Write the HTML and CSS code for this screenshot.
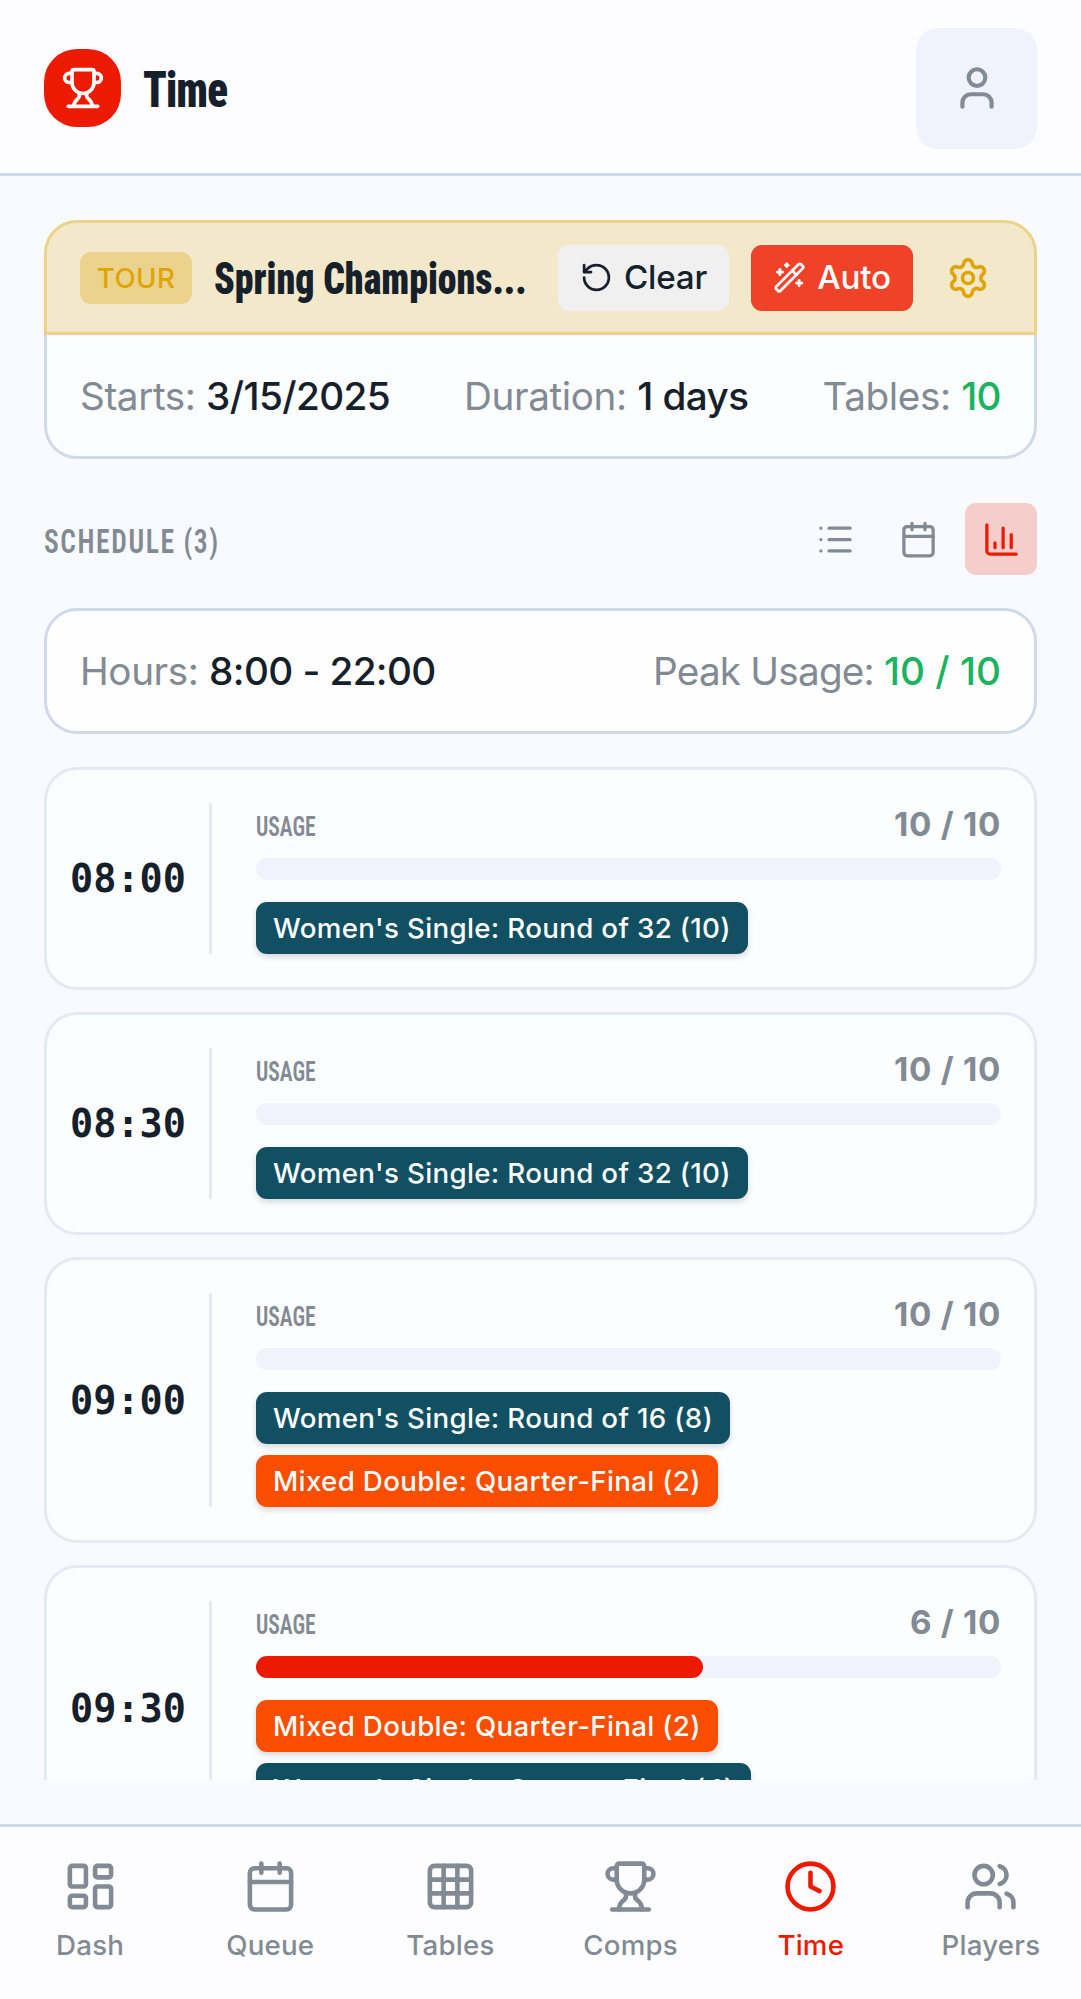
FILE: index.html
```html
<!DOCTYPE html>
<html lang="en">
<head>
    <meta charset="UTF-8">
    <meta name="viewport" content="width=device-width, initial-scale=1.0">
    <title>Time</title>
    <link rel="stylesheet" href="styles.css">
</head>
<body>

    <!-- Top header -->
    <header class="header">
        <div class="brand">
            <div class="logo">
                <svg class="icon icon-md" viewBox="0 0 24 24"><path d="M10 14.66v1.626a2 2 0 0 1-.976 1.696A5 5 0 0 0 7 21.978"/><path d="M14 14.66v1.626a2 2 0 0 0 .976 1.696A5 5 0 0 1 17 21.978"/><path d="M18 9h1.5a1 1 0 0 0 0-5H18"/><path d="M4 22h16"/><path d="M6 9a6 6 0 0 0 12 0V3a1 1 0 0 0-1-1H7a1 1 0 0 0-1 1z"/><path d="M6 9H4.5a1 1 0 0 1 0-5H6"/></svg>
            </div>
            <h1 class="page-title">Time</h1>
        </div>
        <button class="profile">
            <svg class="icon icon-lg" viewBox="0 0 24 24"><path d="M19 21v-2a4 4 0 0 0-4-4H9a4 4 0 0 0-4 4v2"/><circle cx="12" cy="7" r="4"/></svg>
        </button>
    </header>

    <main class="content">
        <!-- Tournament card -->
        <section class="tour">
            <div class="tour-head">
                <span class="badge">TOUR</span>
                <h2 class="tour-name">Spring Champions...</h2>
                <button class="btn btn-clear">
                    <svg class="icon icon-xs" viewBox="0 0 24 24"><path d="M3 12a9 9 0 1 0 9-9 9.75 9.75 0 0 0-6.74 2.74L3 8"/><path d="M3 3v5h5"/></svg>
                    Clear
                </button>
                <button class="btn btn-auto">
                    <svg class="icon icon-xs" viewBox="0 0 24 24"><path d="m21.64 3.64-1.28-1.28a1.21 1.21 0 0 0-1.72 0L2.36 18.64a1.21 1.21 0 0 0 0 1.72l1.28 1.28a1.2 1.2 0 0 0 1.72 0L21.64 5.36a1.2 1.2 0 0 0 0-1.72"/><path d="m14 7 3 3"/><path d="M5 6v4"/><path d="M19 14v4"/><path d="M10 2v2"/><path d="M7 8H3"/><path d="M21 16h-4"/><path d="M11 3H9"/></svg>
                    Auto
                </button>
                <button class="settings">
                    <svg class="icon icon-md" viewBox="0 0 24 24"><path d="M9.671 4.136a2.34 2.34 0 0 1 4.659 0 2.34 2.34 0 0 0 3.319 1.915 2.34 2.34 0 0 1 2.33 4.033 2.34 2.34 0 0 0 0 3.831 2.34 2.34 0 0 1-2.33 4.033 2.34 2.34 0 0 0-3.319 1.915 2.34 2.34 0 0 1-4.659 0 2.34 2.34 0 0 0-3.32-1.915 2.34 2.34 0 0 1-2.33-4.033 2.34 2.34 0 0 0 0-3.831A2.34 2.34 0 0 1 6.35 6.051a2.34 2.34 0 0 0 3.319-1.915"/><circle cx="12" cy="12" r="3"/></svg>
                </button>
            </div>
            <div class="tour-info">
                <div>Starts: <b>3/15/2025</b></div>
                <div>Duration: <b>1 days</b></div>
                <div>Tables: <b class="green">10</b></div>
            </div>
        </section>

        <!-- Schedule title and view switcher -->
        <div class="schedule-bar">
            <h3 class="schedule-title">SCHEDULE (3)</h3>
            <div class="views">
                <button class="view"><svg class="icon icon-sm" viewBox="0 0 24 24"><path d="M3 5h.01M3 12h.01M3 19h.01M8 5h13M8 12h13M8 19h13"/></svg></button>
                <button class="view"><svg class="icon icon-sm" viewBox="0 0 24 24"><path d="M8 2v4M16 2v4"/><rect width="18" height="18" x="3" y="4" rx="2"/><path d="M3 10h18"/></svg></button>
                <button class="view active"><svg class="icon icon-sm" viewBox="0 0 24 24"><path d="M3 3v16a2 2 0 0 0 2 2h16"/><path d="M18 17V9M13 17V5M8 17v-3"/></svg></button>
            </div>
        </div>

        <section class="summary">
            <div>Hours: <b>8:00 - 22:00</b></div>
            <div class="peak">Peak Usage: <b class="green">10 / 10</b></div>
        </section>

        <!-- Time slots -->
        <div class="slots">
            <article class="slot">
                <div class="slot-time">08:00</div>
                <div class="slot-body">
                    <div class="usage"><span class="usage-label">USAGE</span><span class="usage-count">10 / 10</span></div>
                    <div class="bar"></div>
                    <div class="chips">
                        <span class="chip women">Women's Single: Round of 32 (10)</span>
                    </div>
                </div>
            </article>

            <article class="slot">
                <div class="slot-time">08:30</div>
                <div class="slot-body">
                    <div class="usage"><span class="usage-label">USAGE</span><span class="usage-count">10 / 10</span></div>
                    <div class="bar"></div>
                    <div class="chips">
                        <span class="chip women">Women's Single: Round of 32 (10)</span>
                    </div>
                </div>
            </article>

            <article class="slot">
                <div class="slot-time">09:00</div>
                <div class="slot-body">
                    <div class="usage"><span class="usage-label">USAGE</span><span class="usage-count">10 / 10</span></div>
                    <div class="bar"></div>
                    <div class="chips">
                        <span class="chip women">Women's Single: Round of 16 (8)</span>
                        <span class="chip mixed">Mixed Double: Quarter-Final (2)</span>
                    </div>
                </div>
            </article>

            <article class="slot">
                <div class="slot-time">09:30</div>
                <div class="slot-body">
                    <div class="usage"><span class="usage-label">USAGE</span><span class="usage-count">6 / 10</span></div>
                    <div class="bar"><div class="bar-fill" style="width: 60%"></div></div>
                    <div class="chips">
                        <span class="chip mixed">Mixed Double: Quarter-Final (2)</span>
                        <span class="chip women">Women's Single: Quarter-Final (4)</span>
                    </div>
                </div>
            </article>
        </div>
    </main>

    <!-- Bottom navigation -->
    <nav class="nav">
        <a class="nav-item">
            <svg class="icon icon-xl" viewBox="0 0 24 24"><rect width="7" height="9" x="3" y="3" rx="1"/><rect width="7" height="5" x="14" y="3" rx="1"/><rect width="7" height="9" x="14" y="12" rx="1"/><rect width="7" height="5" x="3" y="16" rx="1"/></svg>
            Dash
        </a>
        <a class="nav-item">
            <svg class="icon icon-xl" viewBox="0 0 24 24"><path d="M8 2v4M16 2v4"/><rect width="18" height="18" x="3" y="4" rx="2"/><path d="M3 10h18"/></svg>
            Queue
        </a>
        <a class="nav-item">
            <svg class="icon icon-xl" viewBox="0 0 24 24"><rect width="18" height="18" x="3" y="3" rx="2"/><path d="M3 9h18M3 15h18M9 3v18M15 3v18"/></svg>
            Tables
        </a>
        <a class="nav-item">
            <svg class="icon icon-xl" viewBox="0 0 24 24"><path d="M10 14.66v1.626a2 2 0 0 1-.976 1.696A5 5 0 0 0 7 21.978"/><path d="M14 14.66v1.626a2 2 0 0 0 .976 1.696A5 5 0 0 1 17 21.978"/><path d="M18 9h1.5a1 1 0 0 0 0-5H18"/><path d="M4 22h16"/><path d="M6 9a6 6 0 0 0 12 0V3a1 1 0 0 0-1-1H7a1 1 0 0 0-1 1z"/><path d="M6 9H4.5a1 1 0 0 1 0-5H6"/></svg>
            Comps
        </a>
        <a class="nav-item active">
            <svg class="icon icon-xl" viewBox="0 0 24 24"><circle cx="12" cy="12" r="10"/><path d="M12 6v6l4 2"/></svg>
            Time
        </a>
        <a class="nav-item">
            <svg class="icon icon-xl" viewBox="0 0 24 24"><path d="M16 21v-2a4 4 0 0 0-4-4H6a4 4 0 0 0-4 4v2"/><path d="M16 3.128a4 4 0 0 1 0 7.744"/><path d="M22 21v-2a4 4 0 0 0-3-3.87"/><circle cx="9" cy="7" r="4"/></svg>
            Players
        </a>
    </nav>

</body>
</html>
```
FILE: styles.css
```css
* {
    box-sizing: border-box;
}

body {
    display: flex;
    flex-direction: column;
    height: 1999px;
    margin: 0;
    overflow: hidden;
    font-family: Inter, "Liberation Sans", sans-serif;
    color: #15202b;
    background-color: #f9faff;
}

h1, h2, h3 {
    margin: 0;
    white-space: nowrap;
}

button {
    flex-shrink: 0;
    padding: 0;
    border: none;
    background: none;
    font-family: inherit;
    color: inherit;
}

b {
    font-weight: 550;
    letter-spacing: -0.6px;
    color: #15202b;
}

.green {
    color: #1bb35f;
}

/* icons */
.icon {
    display: block;
    flex-shrink: 0;
    fill: none;
    stroke: currentColor;
    stroke-width: 2;
    stroke-linecap: round;
    stroke-linejoin: round;
}

.icon-xs { width: 33px; height: 33px; }
.icon-sm { width: 39px; height: 39px; }
.icon-md { width: 44px; height: 44px; }
.icon-lg { width: 50px; height: 50px; }
.icon-xl { width: 55px; height: 55px; }

/* condensed headings */
.page-title,
.tour-name,
.schedule-title,
.usage-label {
    font-family: Roboto, sans-serif;
    font-stretch: 75%;
    transform: scaleX(0.86);
    transform-origin: left;
}

/* header */
.header {
    display: flex;
    flex-shrink: 0;
    justify-content: space-between;
    align-items: center;
    height: 176px;
    padding: 3px 44px 0;
    background-color: #fdfdff;
    border-bottom: 3px solid #d0d9e7;
}

.brand {
    display: flex;
    align-items: center;
    gap: 22px;
}

.logo {
    display: flex;
    justify-content: center;
    align-items: center;
    width: 77px;
    height: 78px;
    border-radius: 33px;
    background-color: #ed1a00;
    color: white;
}

.page-title {
    padding-top: 3px;
    font-size: 50px;
    font-weight: 900;
    letter-spacing: -1px;
}

.profile {
    display: flex;
    justify-content: center;
    align-items: center;
    width: 121px;
    height: 121px;
    border-radius: 22px;
    background-color: #f1f3fc;
    color: #828a94;
}

/* main area */
.content {
    display: flex;
    flex: 1;
    flex-direction: column;
    min-height: 0;
    margin: 44px;
    overflow: hidden;
}

.tour {
    flex-shrink: 0;
}

.tour-head {
    display: flex;
    align-items: center;
    gap: 22px;
    height: 115px;
    padding: 0 33px;
    border: 3px solid #ebd38b;
    border-radius: 33px 33px 0 0;
    background-color: #f3e8ca;
}

.badge {
    display: flex;
    flex-shrink: 0;
    justify-content: center;
    align-items: center;
    width: 112px;
    height: 52px;
    border-radius: 11px;
    background-color: #ebd38d;
    color: #e0a400;
    font-size: 27.7px;
    font-weight: 550;
    letter-spacing: 0.4px;
}

.tour-name {
    flex: 1;
    min-width: 0;
    padding-top: 2px;
    font-size: 44px;
    font-weight: 900;
}

.btn {
    display: flex;
    justify-content: center;
    align-items: center;
    gap: 11px;
    height: 66px;
    padding-bottom: 1px;
    border-radius: 11px;
    font-size: 33.2px;
    font-weight: 550;
    letter-spacing: -0.2px;
}

.btn-clear {
    width: 171px;
    background-color: #f0f0f0;
}

.btn-auto {
    width: 162px;
    background-color: #f04129;
    color: white;
}

.settings {
    display: flex;
    justify-content: center;
    align-items: center;
    width: 66px;
    height: 66px;
    color: #e0a400;
}

.tour-info,
.summary {
    display: flex;
    flex-shrink: 0;
    justify-content: space-between;
    align-items: center;
    padding: 0 33px;
    border: 3px solid #d0d9e7;
    font-size: 38.7px;
    letter-spacing: -0.4px;
    color: #828a94;
}

.tour-info {
    height: 124px;
    border-top: none;
    border-radius: 0 0 33px 33px;
    background-color: #fcfdff;
}

.summary {
    height: 126px;
    border-radius: 33px;
    background-color: #fefefe;
}

.peak {
    letter-spacing: -0.8px;
}

.peak b {
    letter-spacing: 0;
}

/* schedule title and view buttons */
.schedule-bar {
    display: flex;
    flex-shrink: 0;
    justify-content: space-between;
    align-items: center;
    margin: 44px 0 33px;
}

.schedule-title {
    padding-top: 5px;
    font-size: 33.2px;
    font-weight: 650;
    letter-spacing: 1.9px;
    transform: scaleX(0.83);
    color: #828a94;
}

.views {
    display: flex;
    gap: 11px;
}

.view {
    display: flex;
    justify-content: center;
    align-items: center;
    width: 72px;
    height: 72px;
    border-radius: 11px;
    color: #828a94;
}

.view.active {
    background-color: #f5cdcb;
    color: #ed1a00;
}

/* slots */
.slots {
    display: flex;
    flex-direction: column;
    gap: 22px;
    margin-top: 33px;
}

.slot {
    display: flex;
    flex-shrink: 0;
    padding: 33px 33px 33px 0;
    border: 3px solid #e4e9f2;
    border-radius: 33px;
    background-color: #fcfdff;
}

.slot-time {
    display: flex;
    justify-content: center;
    align-items: center;
    width: 165px;
    border-right: 3px solid #e4e9f2;
    font-family: "DejaVu Sans Mono", monospace;
    font-size: 38.5px;
    font-weight: 700;
}

.slot-body {
    flex: 1;
    padding-left: 44px;
}

.usage {
    display: flex;
    justify-content: space-between;
    align-items: center;
    height: 44px;
    color: #828a94;
}

.usage-label {
    padding-top: 2px;
    font-size: 27.7px;
    font-weight: 650;
    transform: scaleX(0.78);
}

.usage-count {
    margin-top: -2px;
    font-size: 33.2px;
    font-weight: 700;
    letter-spacing: 0.7px;
}

.bar {
    height: 22px;
    margin: 11px 0 22px;
    border-radius: 11px;
    background-color: #f1f3fc;
}

.bar-fill {
    height: 100%;
    border-radius: 11px;
    background-color: #ed1a00;
}

.chips {
    display: flex;
    flex-direction: column;
    align-items: flex-start;
    gap: 11px;
}

.chip {
    height: 52px;
    padding: 0 17px;
    border-radius: 11px;
    box-shadow: 0 3px 6px rgba(0, 0, 0, 0.15);
    font-size: 27.7px;
    font-weight: 550;
    line-height: 52px;
    letter-spacing: 0.33px;
    color: white;
}

.women {
    background-color: #114f63;
}

.mixed {
    background-color: #f94d00;
}

/* bottom navigation */
.nav {
    display: flex;
    flex-shrink: 0;
    height: 175px;
    border-top: 3px solid #d0d9e7;
    background-color: #fdfdff;
}

.nav-item {
    display: flex;
    flex: 1;
    flex-direction: column;
    align-items: center;
    gap: 14px;
    padding-top: 32px;
    font-size: 27.7px;
    font-weight: 550;
    letter-spacing: 0.2px;
    color: #828a94;
}

.nav-item.active {
    color: #ed1a00;
}
```
